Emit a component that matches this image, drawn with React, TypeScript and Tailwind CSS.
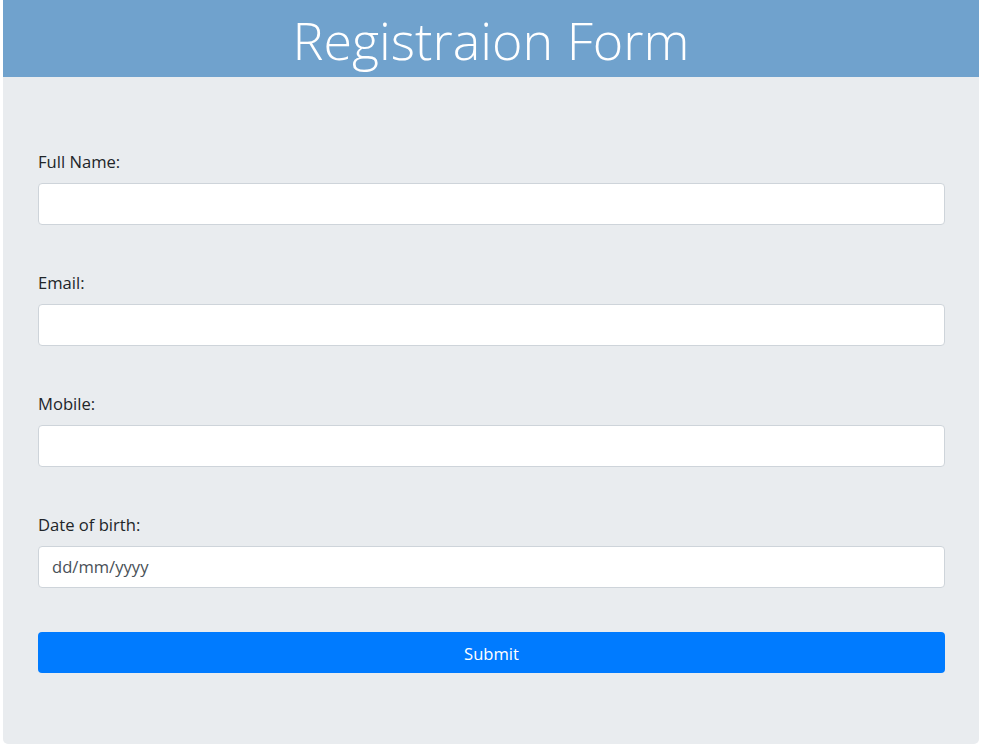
import React from "react";

const font = { fontFamily: '"Open Sans", "Noto Sans", sans-serif' };

function Field({ label, placeholder }: { label: string; placeholder?: string }) {
  return (
    <div className="flex flex-col">
      <label className="text-[16.6px] leading-[24px] text-[#212529] mb-[9px]">{label}</label>
      <div className="h-[42px] w-full rounded-[4px] border border-[#ced4da] bg-white flex items-center px-[13px] text-[16.6px] text-[#495057]">
        {placeholder}
      </div>
    </div>
  );
}

export default function App() {
  return (
    <div className="w-[981px] h-[745px] bg-white" style={font}>
      <div className="ml-[3px] w-[976px]">
        <div className="h-[77px] bg-[#70a2cd] flex justify-center overflow-hidden">
          <h1 className="text-white text-[52px] leading-[62px] mt-[9px] font-light">Registraion Form</h1>
        </div>
        <div className="bg-[#e9ecef] rounded-b-[5px] h-[667px] pl-[35px] pr-[34px] pt-[73px] flex flex-col gap-[46px]">
          <Field label="Full Name:" />
          <Field label="Email:" />
          <Field label="Mobile:" />
          <Field label="Date of birth:" placeholder="dd/mm/yyyy" />
          <button className="h-[41px] w-full rounded-[4px] bg-[#007bff] text-white text-[16.6px] leading-[24px] pt-[2px] -mt-[2px]">Submit</button>
        </div>
      </div>
    </div>
  );
}
